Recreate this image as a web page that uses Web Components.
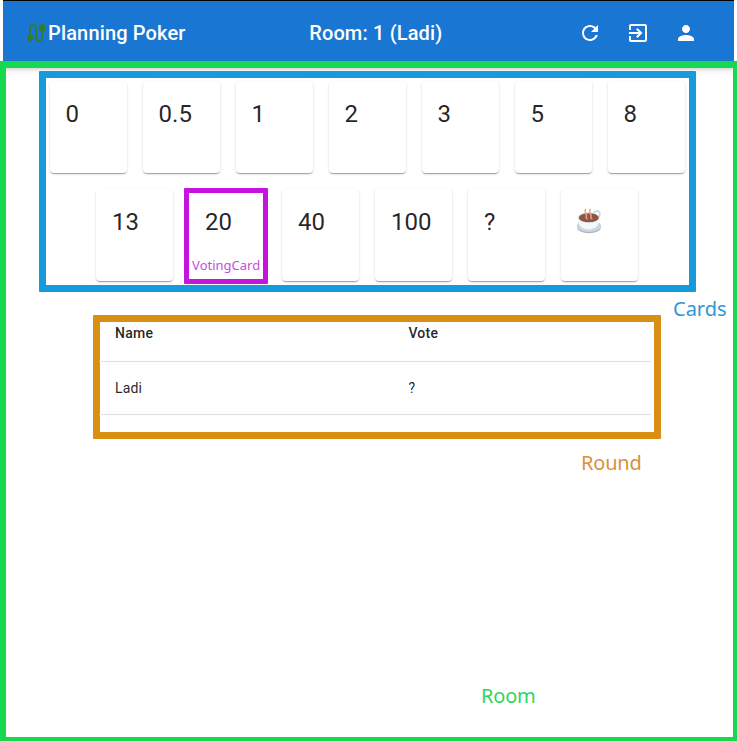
<!DOCTYPE html>
<html lang="en">
<head>
<meta charset="utf-8">
<title>Planning Poker</title>
<style>
html,body{margin:0;height:100%;background:#fff;overflow:hidden}
body{font-family:Roboto,sans-serif;color:rgba(0,0,0,.87)}
</style>
</head>
<body>
<poker-app></poker-app>
<script>
const define = (name, html) => {
  const template = document.createElement('template');
  template.innerHTML = html;
  customElements.define(name, class extends HTMLElement {
    constructor() {
      super();
      this.attachShadow({ mode: 'open' }).append(template.content.cloneNode(true));
    }
  });
};

const icons = {
  cable: 'M20 5V4c0-.55-.45-1-1-1h-2c-.55 0-1 .45-1 1v1h-1v4c0 .55.45 1 1 1h1v7c0 1.1-.9 2-2 2s-2-.9-2-2V7c0-2.21-1.79-4-4-4S5 4.79 5 7v7H4c-.55 0-1 .45-1 1v4h1v1c0 .55.45 1 1 1h2c.55 0 1-.45 1-1v-1h1v-4c0-.55-.45-1-1-1H7V7c0-1.1.9-2 2-2s2 .9 2 2v10c0 2.21 1.79 4 4 4s4-1.79 4-4v-7h1c.55 0 1-.45 1-1V5h-1z',
  refresh: 'M17.65 6.35C16.2 4.9 14.21 4 12 4c-4.42 0-7.99 3.58-7.99 8s3.57 8 7.99 8c3.73 0 6.84-2.55 7.73-6h-2.08c-.82 2.33-3.04 4-5.65 4-3.31 0-6-2.69-6-6s2.69-6 6-6c1.66 0 3.14.69 4.22 1.78L13 11h7V4l-2.35 2.35z',
  exit: 'M10.09 15.59L11.5 17l5-5-5-5-1.41 1.41L12.67 11H3v2h9.67l-2.58 2.59zM19 3H5c-1.11 0-2 .9-2 2v4h2V5h14v14H5v-4H3v4c0 1.1.89 2 2 2h14c1.1 0 2-.9 2-2V5c0-1.1-.9-2-2-2z',
  person: 'M12 12c2.21 0 4-1.79 4-4s-1.79-4-4-4-4 1.79-4 4 1.79 4 4 4zm0 2c-2.67 0-8 1.34-8 4v2h16v-2c0-2.66-5.33-4-8-4z'
};
customElements.define('app-icon', class extends HTMLElement {
  constructor() {
    super();
    this.attachShadow({ mode: 'open' });
  }
  connectedCallback() {
    this.shadowRoot.innerHTML = `<style>:host{display:block;width:24px;height:24px}svg{display:block;fill:currentColor}</style>
      <svg width="24" height="24" viewBox="0 0 24 24"><path d="${icons[this.getAttribute('name')]}"/></svg>`;
  }
});

define('coffee-cup', `
<style>:host{display:block;width:28px;height:28px}svg{display:block}</style>
<svg width="28" height="28" viewBox="0 0 28 28">
  <ellipse cx="12" cy="21" rx="12" ry="6.200" fill="#a9b6c3"/>
  <ellipse cx="12" cy="20" rx="12" ry="6" fill="#ccd6dd"/>
  <path d="M16.500 7.500c1.500-3.300 6.500-3.100 6.400.4-.1 2.600-1.300 4.600-3.200 6" fill="none" stroke="#ccd6dd" stroke-width="1.600"/>
  <path d="M.9 11.800c0 7.400 3.200 11.600 10.700 11.600s10.700-4.200 10.700-11.600z" fill="#f5f8fa"/>
  <ellipse cx="11.600" cy="11.600" rx="10.900" ry="5.300" fill="#e1e8ed"/>
  <ellipse cx="11.800" cy="11.700" rx="10" ry="4.500" fill="#8e5647"/>
  <g fill="none" stroke="#e5a38c" stroke-width="1.500" stroke-linecap="round">
    <path d="M8.600 3.500c-2.200 3 1.800 4 .7 7q-.4 1.500.8 2.300"/>
    <path d="M13.200 3.500c-2.200 3 1.800 4 .7 7q-.4 1.500.8 2.300"/>
  </g>
</svg>`);

define('app-bar', `
<style>
:host{display:flex;box-sizing:border-box;height:65px;margin:0 3px;padding:0 24px 0 21px;border-top:1px solid #000;
 background:#1976d2;color:#fff;align-items:center;justify-content:space-between;clip-path:inset(0 0 -16px 0);
 box-shadow:0 2px 4px -1px rgba(0,0,0,.2),0 4px 5px rgba(0,0,0,.14),0 1px 10px rgba(0,0,0,.12);
 font-size:20px;font-weight:500;line-height:32px;letter-spacing:.15px}
.brand,.actions{display:flex;align-items:center}
.brand app-icon{color:#2e7d32}
.actions app-icon{padding:12px}
</style>
<div class="brand"><app-icon name="cable"></app-icon><span>Planning Poker</span></div>
<span>Room: 1 (Ladi)</span>
<div class="actions"><app-icon name="refresh"></app-icon><app-icon name="exit"></app-icon><app-icon name="person"></app-icon></div>`);

define('voting-card', `
<style>
:host{display:block;box-sizing:border-box;width:77px;height:92px;padding:17px 16px 15px;border-radius:4px;background:#fff;
 box-shadow:0 2px 1px -1px rgba(0,0,0,.2),0 1px 1px rgba(0,0,0,.14),0 1px 3px rgba(0,0,0,.12);
 font-size:24px;line-height:32px;white-space:nowrap}
</style><slot></slot>`);

define('voting-cards', `
<style>
:host{display:flex;box-sizing:border-box;flex-wrap:wrap;justify-content:center;align-content:flex-start;gap:16px;
 width:657px;height:221px;border:7px solid #159bdb;padding:3px .8px 0 0;border-radius:1px}
.picked{position:relative}
.mark{position:absolute;box-sizing:border-box;left:-5px;top:-1px;width:84px;height:96px;border:5px solid #c414de;background:#fff;
 border-radius:1px;padding:13px 0 0 16px;font-size:24px;line-height:32px}
.tag{position:absolute;left:3px;bottom:5px;font:13px/18px "Noto Sans",sans-serif;color:#c94be0}
</style>
<voting-card>0</voting-card><voting-card>0.5</voting-card><voting-card>1</voting-card><voting-card>2</voting-card><voting-card>3</voting-card><voting-card>5</voting-card><voting-card>8</voting-card>
<voting-card>13</voting-card><voting-card class="picked"><div class="mark">20<span class="tag">VotingCard</span></div></voting-card><voting-card>40</voting-card><voting-card>100</voting-card><voting-card>?</voting-card><voting-card><coffee-cup></coffee-cup></voting-card>`);

define('vote-row', `
<style>
:host{display:grid;box-sizing:border-box;grid-template-columns:293.4px 1fr;height:53px;padding:0 0 0 16px;margin-left:-1px;align-items:center;
 border-bottom:1px solid #e0e0e0;font-size:14px;line-height:20px;letter-spacing:.15px}
</style><slot name="name"></slot><slot name="vote"></slot>`);

define('vote-round', `
<style>
:host{display:block;box-sizing:border-box;width:568px;height:124px;border:7px solid #d98f14;padding-right:3px;border-radius:1px}
.head{height:40px;padding-top:1px;align-items:start;font-weight:500;letter-spacing:.25px}
</style>
<vote-row class="head"><span slot="name">Name</span><span slot="vote">Vote</span></vote-row>
<vote-row><span slot="name">Ladi</span><span slot="vote">?</span></vote-row>`);

define('region-label', `
<style>:host{display:block;font:20px/28px "Noto Sans",sans-serif;white-space:nowrap}</style><slot></slot>`);

define('poker-room', `
<style>
:host{display:block;position:relative;box-sizing:border-box;flex:1;margin-top:-4px;border:solid #16d94f;border-width:7px 4px 4px 6px}
voting-cards{margin:3px 0 0 33px}
vote-round{margin:23px 0 0 87px}
region-label{position:absolute}
.cards{left:667px;top:227px;color:#2e98d6}
.round{left:575px;top:381px;color:#d8923a;letter-spacing:-.2px}
.room{left:475px;top:614px;color:#2ed65d;letter-spacing:-.2px}
</style>
<voting-cards></voting-cards>
<vote-round></vote-round>
<region-label class="cards">Cards</region-label>
<region-label class="round">Round</region-label>
<region-label class="room">Room</region-label>`);

define('poker-app', `
<style>:host{display:flex;flex-direction:column;width:737px;height:741px}</style>
<app-bar></app-bar><poker-room></poker-room>`);
</script>
</body>
</html>
